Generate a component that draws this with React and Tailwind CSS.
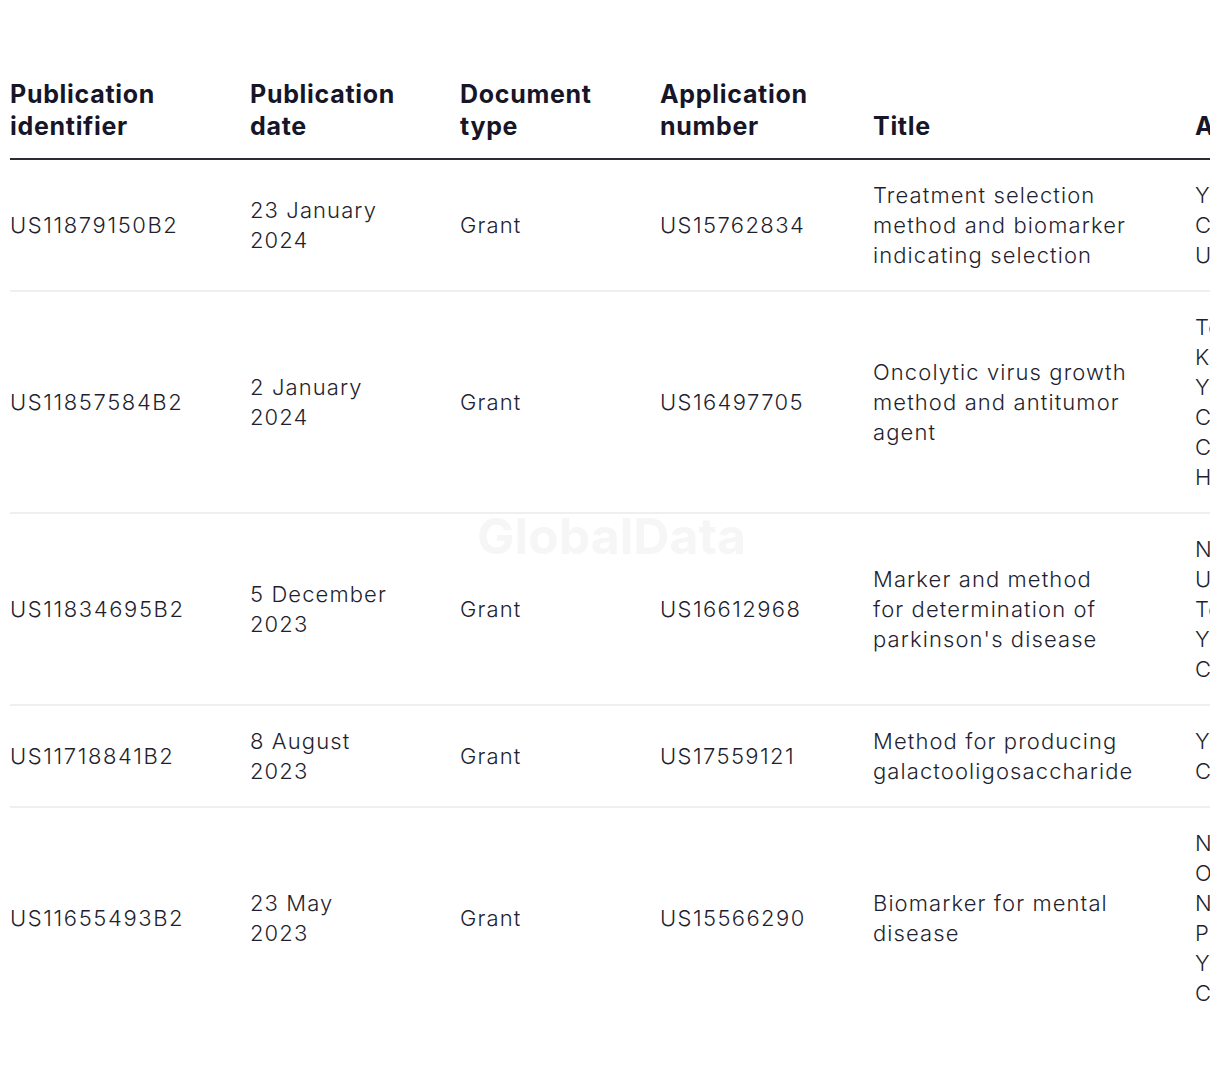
import React from "react";

//column widths in px
const columns = [
    { label: ["Publication", "identifier"], width: 240 },
    { label: ["Publication", "date"], width: 210 },
    { label: ["Document", "type"], width: 200 },
    { label: ["Application", "number"], width: 213 },
    { label: ["Title"], width: 322 },
    { label: ["Assignees"], width: 360 },
];

const rows = [
    {
        id: "US11879150B2",
        date: ["23 January", "2024"],
        type: "Grant",
        app: "US15762834",
        title: ["Treatment selection", "method and biomarker", "indicating selection"],
        assignees: ["Yamaguchi University", "Chugai Pharmaceutical", "Ube Industries"],
    },
    {
        id: "US11857584B2",
        date: ["2 January", "2024"],
        type: "Grant",
        app: "US16497705",
        title: ["Oncolytic virus growth", "method and antitumor", "agent"],
        assignees: ["Tottori University", "Kaneka Corp", "Yamaguchi University", "Chiba University", "Chugai Pharmaceutical", "Hokkaido University"],
    },
    {
        id: "US11834695B2",
        date: ["5 December", "2023"],
        type: "Grant",
        app: "US16612968",
        title: ["Marker and method", "for determination of", "parkinson's disease"],
        assignees: ["Niigata University", "University of Tokyo", "Tohoku University", "Yamaguchi University", "Chiba University"],
    },
    {
        id: "US11718841B2",
        date: ["8 August", "2023"],
        type: "Grant",
        app: "US17559121",
        title: ["Method for producing", "galactooligosaccharide"],
        assignees: ["Yakult Honsha", "Co Ltd"],
    },
    {
        id: "US11655493B2",
        date: ["23 May", "2023"],
        type: "Grant",
        app: "US15566290",
        title: ["Biomarker for mental", "disease"],
        assignees: ["Nagoya University", "Osaka University", "Niigata University", "Pharmaceuticals", "Yamaguchi University", "Chugai Pharmaceutical"],
    },
];

const Lines = ({ lines }) =>
    lines.map((line, i) => (
        <span key={i} className="block whitespace-nowrap">
            {line}
        </span>
    ));

export default function App() {
    return (
        <div
            className="relative min-h-[1070px] bg-white pt-[78px]"
            style={{ fontFamily: "Inter, 'Liberation Sans', sans-serif" }}
        >
            {/* table, clipped on the right */}
            <div className="ml-[10px] w-[1200px] overflow-hidden">
                <table className="table-fixed border-collapse w-[1545px] text-left">
                    <colgroup>
                        {columns.map((col, i) => (
                            <col key={i} style={{ width: col.width }} />
                        ))}
                    </colgroup>
                    <thead>
                        <tr className="border-b-2 border-[#2b2b33]">
                            {columns.map((col, i) => (
                                <th
                                    key={i}
                                    className="p-0 pb-4 align-bottom text-[25px] leading-[32px] font-bold tracking-[0.7px] text-[#161628]"
                                >
                                    <Lines lines={col.label} />
                                </th>
                            ))}
                        </tr>
                    </thead>
                    <tbody className="text-[22px] leading-[30px] font-light tracking-[1.1px] text-[#1f1f30]">
                        {rows.map((row, index) => (
                            <tr
                                key={index}
                                className={
                                    index < rows.length - 1
                                        ? "border-b-2 border-[#efefef]"
                                        : ""
                                }
                            >
                                <td className="p-0 py-[20px] align-middle tracking-[1.6px]">
                                    {row.id}
                                </td>
                                <td className="p-0 align-middle">
                                    <Lines lines={row.date} />
                                </td>
                                <td className="p-0 align-middle">{row.type}</td>
                                <td className="p-0 align-middle tracking-[1.4px]">
                                    {row.app}
                                </td>
                                <td className="p-0 align-middle">
                                    <Lines lines={row.title} />
                                </td>
                                <td className="p-0 py-[20px] align-middle">
                                    <Lines lines={row.assignees} />
                                </td>
                            </tr>
                        ))}
                    </tbody>
                </table>
            </div>

            {/* watermark */}
            <div className="pointer-events-none absolute left-[477px] top-[508px] text-[50px] leading-[56px] font-bold text-[#f6f6f6] select-none">
                GlobalData
            </div>
        </div>
    );
}
